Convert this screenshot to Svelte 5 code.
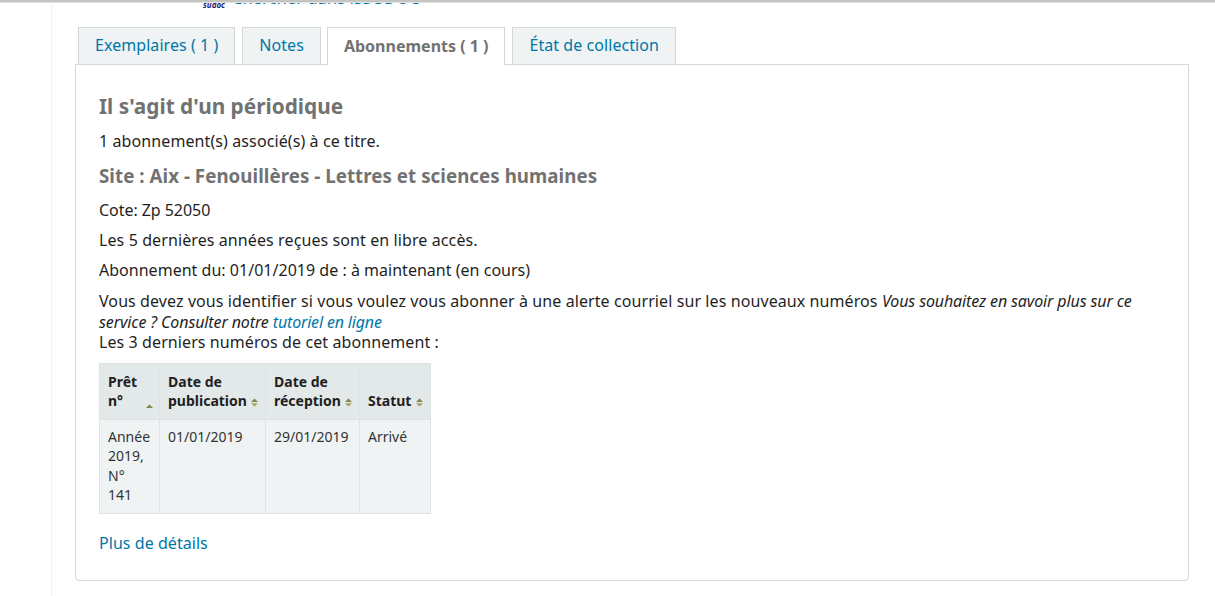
<script>
	const tabs = [
		{ label: 'Exemplaires ( 1 )' },
		{ label: 'Notes' },
		{ label: 'Abonnements ( 1 )', active: true },
		{ label: 'État de collection' }
	];

	const columns = [
		{ label: 'Prêt n°', sort: 'asc', width: 60 },
		{ label: 'Date de publication', sort: 'both', width: 106 },
		{ label: 'Date de réception', sort: 'both', width: 94 },
		{ label: 'Statut', sort: 'both', width: 71 }
	];

	const rows = [['Année 2019, N° 141', '01/01/2019', '29/01/2019', 'Arrivé']];
</script>

<div class="topline"></div>
<div class="page">
	<div class="search-strip">
		<span class="sudoc">sudoc</span>
		<a class="search-link" href="#top">Chercher dans iSSUDOC</a>
	</div>

	<ul class="tabs">
		{#each tabs as tab}
			<li class="tab" class:active={tab.active}>{tab.label}</li>
		{/each}
	</ul>

	<section class="panel">
		<h2>Il s'agit d'un périodique</h2>
		<p class="count">1 abonnement(s) associé(s) à ce titre.</p>
		<h3>Site : Aix - Fenouillères - Lettres et sciences humaines</h3>
		<p class="cote">Cote: Zp 52050</p>
		<p>Les 5 dernières années reçues sont en libre accès.</p>
		<p class="period">Abonnement du: 01/01/2019 de : à maintenant (en cours)</p>
		<p class="alert">
			Vous devez vous identifier si vous voulez vous abonner à une alerte courriel sur les nouveaux numéros
			<em>Vous souhaitez en savoir plus sur ce service ? Consulter notre <a href="#top">tutoriel en ligne</a></em>
			<br />Les 3 derniers numéros de cet abonnement :
		</p>

		<table>
			<colgroup>
				{#each columns as col}
					<col style:width="{col.width}px" />
				{/each}
			</colgroup>
			<thead>
				<tr>
					{#each columns as col}
						<th>
							{col.label}
							<svg class="sort" class:asc={col.sort === 'asc'} width="9" height="9" viewBox="0 0 9 9">
								<path d="M4.5 0.5 L8 4 H1 Z" fill="#85854a" />
								{#if col.sort === 'both'}
									<path d="M1 5.2 H8 L4.5 8.5 Z" fill="#a3a366" />
								{/if}
							</svg>
						</th>
					{/each}
				</tr>
			</thead>
			<tbody>
				{#each rows as row}
					<tr>
						{#each row as cell}
							<td>{cell}</td>
						{/each}
					</tr>
				{/each}
			</tbody>
		</table>

		<p class="more"><a href="#top">Plus de détails</a></p>
	</section>
</div>

<style>
	:global(body) {
		margin: 0;
		background: #fff;
		font-family: 'Noto Sans', sans-serif;
		font-size: 16px;
		color: #1f1f1f;
		overflow: hidden;
	}

	a {
		color: #0076a8;
		text-decoration: none;
	}

	.topline {
		box-sizing: border-box;
		height: 3px;
		background: #c4c4c0;
		border-bottom: 1px solid #e2e2e0;
	}

	.page {
		box-sizing: border-box;
		width: 1138px;
		height: 593px;
		margin-left: 51px;
		padding-left: 23px;
		border-left: 1px solid #f0f0f0;
	}

	.search-strip {
		display: flex;
		align-items: flex-end;
		gap: 7px;
		height: 6px;
		padding-left: 128px;
		overflow: hidden;
		line-height: 1;
	}

	.sudoc {
		width: 22px;
		font-size: 8px;
		font-weight: 700;
		font-style: italic;
		color: #22226e;
	}

	.search-link {
		flex: none;
		margin-bottom: 1px;
		font-size: 16.6px;
		line-height: 20px;
	}

	.tabs {
		position: relative;
		z-index: 1;
		display: flex;
		gap: 7px;
		margin: 18px 0 0 3px;
		padding: 0;
		list-style: none;
	}

	.tab {
		box-sizing: border-box;
		height: 38px;
		padding: 6px 16px 0;
		border: 1px solid #d6d6d6;
		background: #eff3f4;
		color: #0076a8;
		line-height: 22px;
		letter-spacing: 0.06px;
	}

	.tab.active {
		height: 39px;
		margin-bottom: -1px;
		margin-left: -1px;
		padding-top: 7px;
		border-bottom-color: #fff;
		background: #fff;
		color: #727272;
		font-weight: 700;
		letter-spacing: 0;
	}

	.panel {
		box-sizing: border-box;
		height: 517px;
		margin-top: -1px;
		padding: 26px 23px 0;
		border: 1px solid #d6d6d6;
		border-radius: 0 0 4px 4px;
	}

	h2 {
		margin: 0 0 9px;
		color: #727272;
		font-size: 20.8px;
		font-weight: 700;
		line-height: 30px;
	}

	h3 {
		margin: 0 0 10px;
		color: #727272;
		font-size: 18.72px;
		font-weight: 700;
		line-height: 27px;
		letter-spacing: 0.05px;
	}

	p {
		margin: 0 0 8px;
		line-height: 22px;
		letter-spacing: 0.1px;
	}

	.count {
		margin-bottom: 10px;
	}

	.cote {
		letter-spacing: -0.05px;
	}

	.period {
		margin-bottom: 10px;
		letter-spacing: 0.02px;
	}

	.alert {
		margin-bottom: 10px;
		line-height: 20.6px;
		letter-spacing: 0.09px;
	}

	em {
		letter-spacing: -0.12px;
	}

	em a {
		letter-spacing: -0.17px;
	}

	table {
		table-layout: fixed;
		width: 331px;
		border-collapse: collapse;
		font-size: 14px;
		line-height: 19.6px;
	}

	th,
	td {
		border: 1px solid #dde2e2;
		text-align: left;
		vertical-align: top;
	}

	th {
		position: relative;
		padding: 8px 18px 8px 8px;
		vertical-align: bottom;
		background: #e3e8e8;
		font-weight: 700;
	}

	td {
		padding: 7px 8px 8px;
		background: #eff3f4;
		color: #333;
		line-height: 19.5px;
	}

	/* sits in the corner of the th like the tablesorter background image */
	.sort {
		position: absolute;
		right: 6px;
		bottom: 12px;
	}

	.sort.asc {
		right: 5px;
		bottom: 6px;
	}

	.more {
		margin: 18px 0 0;
		letter-spacing: 0.05px;
	}
</style>
